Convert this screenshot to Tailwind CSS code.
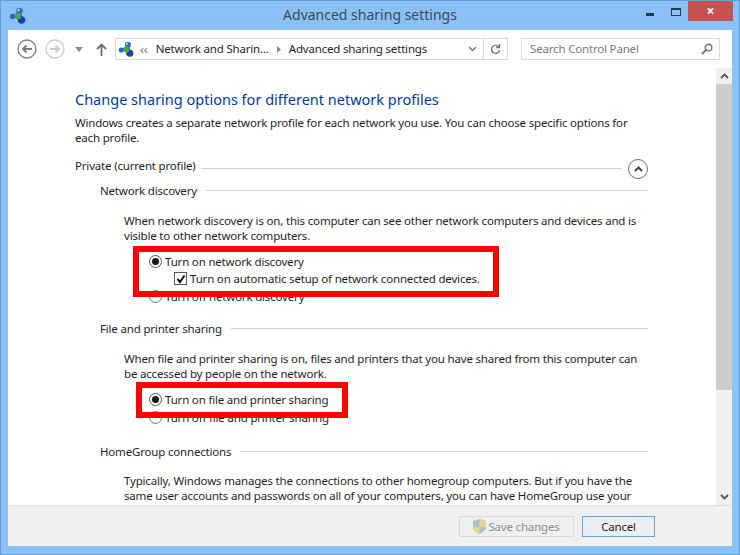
<!DOCTYPE html>
<html lang="en">
<head>
    <meta charset="UTF-8">
    <title>Advanced sharing settings</title>
    <script src="https://cdn.jsdelivr.net/npm/@tailwindcss/browser@4"></script>
</head>
<body class="m-0 overflow-hidden">
<div class="relative w-[740px] h-[555px] flex flex-col bg-[#8cc1f7] border border-[#5f9fdc] overflow-hidden font-['Noto_Sans','Open_Sans',sans-serif] text-[11.5px] tracking-[-0.18px] text-[#1e1e1e]">

    <!-- title bar -->
    <div class="h-[29px] shrink-0 flex items-start relative">
        <svg class="w-[18px] h-[18px] ml-[8px] mt-[6px]" viewBox="0 0 18 18">
            <path d="M5 9 11 4 13 13z" fill="none" stroke="#1d3f6e" stroke-width="1.500"/>
            <circle cx="3.500" cy="9.500" r="2.700" fill="#2f62c4"/><circle cx="10.500" cy="4" r="3.300" fill="#2f6fd0"/><circle cx="12.500" cy="13" r="3.800" fill="#2340a8"/><circle cx="9" cy="9" r="3.200" fill="#3fae4a"/><circle cx="9.500" cy="3" r="1.200" fill="#bcd8f5"/>
        </svg>
        <div class="absolute left-0 right-0 top-[4px] text-center text-[14px] leading-[20px] tracking-normal text-[#3c4a58]">Advanced sharing settings</div>
        <div class="ml-auto flex items-start">
            <div class="w-[8px] h-[3px] bg-[#26374a] mt-[12px] mr-[17px]"></div>
            <div class="w-[10px] h-[8px] border border-[#26374a] border-t-[2px] mt-[7px] mr-[7px]"></div>
            <div class="w-[45px] h-[20px] bg-[#c75050] text-white text-[14px] leading-[19px] text-center font-bold mr-[6px]">×</div>
        </div>
    </div>

    <!-- client -->
    <div class="mx-[7px] h-[516px] flex flex-col bg-white">
        <!-- nav bar -->
        <div class="h-[38px] shrink-0 flex items-center relative whitespace-nowrap">
            <svg class="w-[20px] h-[20px] ml-[9px]" viewBox="0 0 20 20" fill="none" stroke="#7b7b7b">
                <circle cx="10" cy="10" r="9" stroke-width="1.300"/><path d="M15 10H6M9.500 6.500 6 10l3.500 3.500" stroke-width="1.800"/>
            </svg>
            <svg class="w-[20px] h-[20px] ml-[8px]" viewBox="0 0 20 20" fill="none" stroke="#c9c9c9">
                <circle cx="10" cy="10" r="9" stroke-width="1.300"/><path d="M5 10h9M10.500 6.500 14 10l-3.500 3.500" stroke-width="1.800"/>
            </svg>
            <svg class="w-[8px] h-[5px] ml-[10px]" viewBox="0 0 8 5"><path d="M0 0h8L4 5z" fill="#8a8a8a"/></svg>
            <svg class="w-[11px] h-[13px] ml-[13px]" viewBox="0 0 11 13" fill="none" stroke="#6e6e6e" stroke-width="1.800"><path d="M5.500 13V2M1 6l4.500-4.500L10 6"/></svg>
            <div class="ml-[8px] w-[393px] h-[22px] border border-[#d9d9d9] flex items-center">
                <svg class="w-[17px] h-[17px] ml-[2px]" viewBox="0 0 18 18">
                    <path d="M5 9 11 4 13 13z" fill="none" stroke="#1d3f6e" stroke-width="1.500"/>
                    <circle cx="3.500" cy="9.500" r="2.700" fill="#2f62c4"/><circle cx="10.500" cy="4" r="3.300" fill="#2f6fd0"/><circle cx="12.500" cy="13" r="3.800" fill="#2340a8"/><circle cx="9" cy="9" r="3.200" fill="#3fae4a"/><circle cx="9.500" cy="3" r="1.200" fill="#bcd8f5"/>
                </svg>
                <span class="ml-[5px] text-[#777] text-[13px] leading-[15px]">‹‹</span>
                <span class="ml-[8px]">Network and Sharin...</span>
                <svg class="w-[4px] h-[7px] ml-[8px]" viewBox="0 0 4 7"><path d="M0 0l4 3.500L0 7z" fill="#8a8a8a"/></svg>
                <span class="ml-[8px]">Advanced sharing settings</span>
                <svg class="w-[9px] h-[6px] ml-auto mr-[6px]" viewBox="0 0 9 6" fill="none" stroke="#777" stroke-width="1.500"><path d="M1 1l3.500 3.500L8 1"/></svg>
                <div class="w-[24px] h-full border-l border-[#d9d9d9] flex items-center justify-center">
                    <svg class="w-[11px] h-[11px]" viewBox="0 0 11 11" fill="none" stroke="#777" stroke-width="1.400"><path d="M8.800 3a4 4 0 1 0 .7 3M9.500 0v3.500H6"/></svg>
                </div>
            </div>
            <div class="ml-[13px] w-[199px] h-[22px] border border-[#d9d9d9] flex items-center pl-[8px] pr-[6px] text-[#7a7a7a]">
                <span>Search Control Panel</span>
                <svg class="w-[12px] h-[12px] ml-auto" viewBox="0 0 12 12" fill="none" stroke="#777"><circle cx="7.500" cy="4.500" r="3.300" stroke-width="1.400"/><path d="M5 7 1 11" stroke-width="2"/></svg>
            </div>
        </div>

        <div class="flex-1 flex min-h-0">
            <!-- content -->
            <div class="flex-1 overflow-hidden pl-[67px] pr-[68px] leading-[15px]">
                <h1 class="mt-[21px] text-[14.500px] leading-[20px] tracking-normal text-[#003b9b]">Change sharing options for different network profiles</h1>
                <p class="mt-[6px] w-[570px]">Windows creates a separate network profile for each network you use. You can choose specific options for each profile.</p>

                <div class="mt-[13px] h-[15px] flex items-center">
                    <span>Private (current profile)</span>
                    <div class="flex-1 h-px bg-[#d0d0d0] ml-[5px] mt-[6px]"></div>
                    <div class="w-[20px] h-[20px] ml-[6px] mt-[6px] rounded-full border-[1.500px] border-[#6b6b6b] flex items-center justify-center">
                        <svg class="w-[9px] h-[6px]" viewBox="0 0 9 6" fill="none" stroke="#444" stroke-width="2"><path d="M1 5l3.500-3.500L8 5"/></svg>
                    </div>
                </div>

                <div class="ml-[25px]">
                    <div class="mt-[10px] flex items-center h-[15px]">
                        <span>Network discovery</span>
                        <div class="flex-1 h-px bg-[#d0d0d0] ml-[9px]"></div>
                    </div>
                    <div class="ml-[24px]">
                        <p class="mt-[15px] w-[520px]">When network discovery is on, this computer can see other network computers and devices and is visible to other network computers.</p>
                        <div class="mt-[11px] ml-[25px] h-[15px] flex items-center">
                            <span class="w-[13px] h-[13px] rounded-full border border-[#555] flex items-center justify-center"><span class="w-[7px] h-[7px] rounded-full bg-[#1a1a1a]"></span></span>
                            <span class="ml-[3px]">Turn on network discovery</span>
                        </div>
                        <div class="mt-[2px] ml-[50px] h-[15px] flex items-center">
                            <span class="w-[13px] h-[13px] border border-[#555] flex items-center justify-center">
                                <svg class="w-[10px] h-[10px]" viewBox="0 0 10 10" fill="none" stroke="#111" stroke-width="2"><path d="M1.500 5 4 8l4.500-6.500"/></svg>
                            </span>
                            <span class="ml-[3px]">Turn on automatic setup of network connected devices.</span>
                        </div>
                        <div class="mt-[3px] ml-[25px] h-[15px] flex items-center">
                            <span class="w-[13px] h-[13px] rounded-full border border-[#777]"></span>
                            <span class="ml-[3px]">Turn off network discovery</span>
                        </div>
                    </div>

                    <div class="mt-[17px] flex items-center h-[15px]">
                        <span>File and printer sharing</span>
                        <div class="flex-1 h-px bg-[#d0d0d0] ml-[9px]"></div>
                    </div>
                    <div class="ml-[24px]">
                        <p class="mt-[15px] w-[520px]">When file and printer sharing is on, files and printers that you have shared from this computer can be accessed by people on the network.</p>
                        <div class="mt-[11px] ml-[25px] h-[15px] flex items-center">
                            <span class="w-[13px] h-[13px] rounded-full border border-[#555] flex items-center justify-center"><span class="w-[7px] h-[7px] rounded-full bg-[#1a1a1a]"></span></span>
                            <span class="ml-[3px]">Turn on file and printer sharing</span>
                        </div>
                        <div class="mt-[3px] ml-[25px] h-[15px] flex items-center">
                            <span class="w-[13px] h-[13px] rounded-full border border-[#777]"></span>
                            <span class="ml-[3px]">Turn off file and printer sharing</span>
                        </div>
                    </div>

                    <div class="mt-[19px] flex items-center h-[15px]">
                        <span>HomeGroup connections</span>
                        <div class="flex-1 h-px bg-[#d0d0d0] ml-[9px]"></div>
                    </div>
                    <div class="ml-[24px]">
                        <p class="mt-[14px] w-[520px]">Typically, Windows manages the connections to other homegroup computers. But if you have the same user accounts and passwords on all of your computers, you can have HomeGroup use your</p>
                    </div>
                </div>
            </div>

            <!-- scrollbar -->
            <div class="w-[16px] shrink-0 bg-[#f0f0f0] flex flex-col items-center">
                <div class="h-[16px] flex items-center">
                    <svg class="w-[9px] h-[6px]" viewBox="0 0 9 6" fill="none" stroke="#555" stroke-width="1.800"><path d="M1 5l3.500-3.500L8 5"/></svg>
                </div>
                <div class="w-full h-[306px] bg-[#cdcdcd]"></div>
                <div class="mt-auto h-[16px] flex items-center">
                    <svg class="w-[9px] h-[6px]" viewBox="0 0 9 6" fill="none" stroke="#555" stroke-width="1.800"><path d="M1 1l3.500 3.500L8 1"/></svg>
                </div>
            </div>
        </div>

        <!-- footer -->
        <div class="h-[41px] shrink-0 bg-[#f0f0f0] border-t border-[#dfdfdf] flex items-start pt-[10px]">
            <div class="ml-[451px] w-[115px] h-[21px] border border-[#d9d9d9] bg-[#efefef] flex items-center justify-center text-[#8d8d8d]">
                <svg class="w-[13px] h-[15px] mr-[2px]" viewBox="0 0 13 15">
                    <path d="M6.500 0 13 2v6c0 3.500-3 5.500-6.500 7C3 13.500 0 11.500 0 8V2z" fill="#a9c0dd"/>
                    <path d="M6.500 0 13 2v6H6.500zM6.500 8H0c0 3.500 3 5.500 6.500 7z" fill="#e6d58f"/>
                </svg>
                <span>Save changes</span>
            </div>
            <div class="ml-[8px] w-[73px] h-[21px] border border-[#5fa4e0] bg-[#eeeeee] flex items-center justify-center text-[#222]">Cancel</div>
        </div>
    </div>

    <!-- red callouts drawn over the window -->
    <div class="absolute left-[132px] top-[245px] w-[366px] h-[51px] border-[6px] border-[#ff0000]"></div>
    <div class="absolute left-[135px] top-[381px] w-[212px] h-[36px] border-[6px] border-[#ff0000]"></div>
</div>
</body>
</html>
